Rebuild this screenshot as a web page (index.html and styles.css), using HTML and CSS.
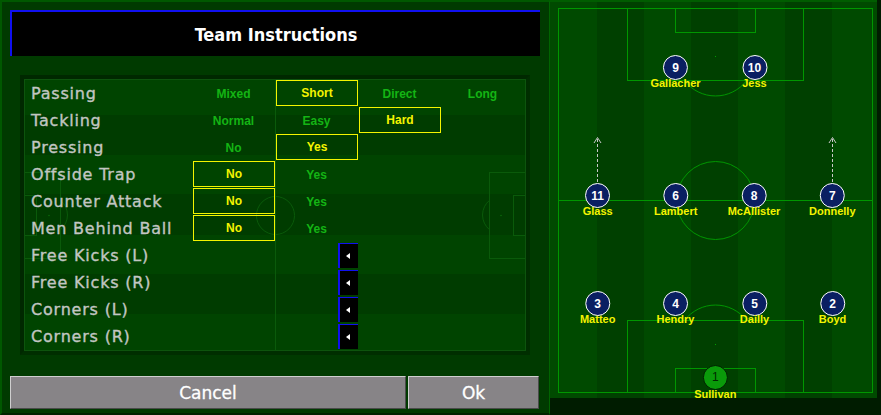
FILE: index.html
```html
<!DOCTYPE html>
<html>
<head>
<meta charset="utf-8">
<title>Team Instructions</title>
<link rel="stylesheet" href="styles.css">
</head>
<body>
<div class="screen">
  <section class="instructions">
    <header class="title">Team Instructions</header>
    <div class="frame">
      <div class="table">
        <svg class="ghost-pitch" width="500" height="270" viewBox="0 0 500 270">
          <rect x="0" y="0" width="500" height="270" fill="#003c00"/>
          <rect x="0" y="-5" width="500" height="40" fill="#004400"/>
          <rect x="0" y="75" width="500" height="39" fill="#004400"/>
          <rect x="0" y="155" width="500" height="39" fill="#004400"/>
          <rect x="0" y="234" width="500" height="40" fill="#004400"/>
          <g fill="none" stroke="#0a5a0a" stroke-width="1">
            <line x1="250.5" y1="0" x2="250.5" y2="270"/>
            <circle cx="250.5" cy="135.5" r="19"/>
            <rect x="464.5" y="92.5" width="40" height="86"/>
            <rect x="488.5" y="115.5" width="20" height="40"/>
            <path d="M464.5 120.3 A19 19 0 0 0 464.5 149.7"/>
            <rect x="-4.5" y="92.5" width="40" height="86"/>
            <rect x="-8.5" y="115.5" width="20" height="40"/>
            <path d="M35.5 120.3 A19 19 0 0 1 35.5 149.7"/>
          </g>
          <circle cx="476" cy="135.5" r="0.8" fill="#0a6a0a"/>
          <circle cx="24" cy="135.5" r="0.8" fill="#0a6a0a"/>
        </svg>

        <div class="row">
          <div class="label">Passing</div>
          <div class="opt">Mixed</div>
          <div class="opt sel"><span class="box">Short</span></div>
          <div class="opt">Direct</div>
          <div class="opt">Long</div>
        </div>
        <div class="row">
          <div class="label">Tackling</div>
          <div class="opt">Normal</div>
          <div class="opt">Easy</div>
          <div class="opt sel"><span class="box">Hard</span></div>
          <div class="opt"></div>
        </div>
        <div class="row">
          <div class="label">Pressing</div>
          <div class="opt">No</div>
          <div class="opt sel"><span class="box">Yes</span></div>
          <div class="opt"></div>
          <div class="opt"></div>
        </div>
        <div class="row">
          <div class="label">Offside Trap</div>
          <div class="opt sel"><span class="box">No</span></div>
          <div class="opt">Yes</div>
          <div class="opt"></div>
          <div class="opt"></div>
        </div>
        <div class="row">
          <div class="label">Counter Attack</div>
          <div class="opt sel"><span class="box">No</span></div>
          <div class="opt">Yes</div>
          <div class="opt"></div>
          <div class="opt"></div>
        </div>
        <div class="row">
          <div class="label">Men Behind Ball</div>
          <div class="opt sel"><span class="box">No</span></div>
          <div class="opt">Yes</div>
          <div class="opt"></div>
          <div class="opt"></div>
        </div>
        <div class="row">
          <div class="label">Free Kicks (L)</div>
          <div class="opt"></div>
          <div class="opt picker"><span class="arrow-btn"><span class="tri"></span></span></div>
          <div class="opt"></div>
          <div class="opt"></div>
        </div>
        <div class="row">
          <div class="label">Free Kicks (R)</div>
          <div class="opt"></div>
          <div class="opt picker"><span class="arrow-btn"><span class="tri"></span></span></div>
          <div class="opt"></div>
          <div class="opt"></div>
        </div>
        <div class="row">
          <div class="label">Corners (L)</div>
          <div class="opt"></div>
          <div class="opt picker"><span class="arrow-btn"><span class="tri"></span></span></div>
          <div class="opt"></div>
          <div class="opt"></div>
        </div>
        <div class="row">
          <div class="label">Corners (R)</div>
          <div class="opt"></div>
          <div class="opt picker"><span class="arrow-btn"><span class="tri"></span></span></div>
          <div class="opt"></div>
          <div class="opt"></div>
        </div>
      </div>
    </div>
    <div class="buttons">
      <button class="btn cancel">Cancel</button>
      <button class="btn ok">Ok</button>
    </div>
  </section>

  <section class="pitch-panel">
    <svg class="pitch" width="327" height="398" viewBox="0 0 327 398">
      <rect x="0" y="0" width="327" height="398" fill="#004000"/>
      <rect x="0" y="0" width="47" height="398" fill="#004a00"/>
      <rect x="94" y="0" width="47" height="398" fill="#004a00"/>
      <rect x="188" y="0" width="47" height="398" fill="#004a00"/>
      <rect x="282" y="0" width="47" height="398" fill="#004a00"/>
      <g fill="none" stroke="#009600" stroke-width="1">
        <rect x="8.5" y="8.5" width="314" height="384"/>
        <rect x="77.5" y="8.5" width="176" height="72"/>
        <rect x="125.5" y="8.5" width="80" height="24"/>
        <path d="M134.4 80.5 A39 39 0 0 0 196.6 80.5"/>
        <line x1="8.5" y1="200.5" x2="322.5" y2="200.5"/>
        <circle cx="165.5" cy="200.5" r="39"/>
        <rect x="77.5" y="320.5" width="176" height="72"/>
        <rect x="125.5" y="368.5" width="80" height="24"/>
        <path d="M134.4 320.5 A39 39 0 0 1 196.6 320.5"/>
      </g>
      <g fill="#00a000">
        <rect x="165" y="56" width="1" height="1"/>
        <rect x="165" y="344" width="1" height="1"/>
      </g>
      <g fill="none" stroke="#c8c8c8" stroke-width="1">
        <line x1="47.5" y1="139" x2="47.5" y2="182" stroke-dasharray="3 2"/>
        <polyline points="44,143 47.5,137.5 51,143"/>
        <line x1="282.5" y1="139" x2="282.5" y2="182" stroke-dasharray="3 2"/>
        <polyline points="279,143 282.5,137.5 286,143"/>
      </g>
    </svg>

    <div class="player" style="left:125.5px;top:55px"><span class="disc">9</span><span class="name">Gallacher</span></div>
    <div class="player" style="left:204.5px;top:55px"><span class="disc">10</span><span class="name">Jess</span></div>
    <div class="player" style="left:47.7px;top:183px"><span class="disc">11</span><span class="name">Glass</span></div>
    <div class="player" style="left:125.7px;top:183px"><span class="disc">6</span><span class="name">Lambert</span></div>
    <div class="player" style="left:204px;top:183px"><span class="disc">8</span><span class="name">McAllister</span></div>
    <div class="player" style="left:282.3px;top:183px"><span class="disc">7</span><span class="name">Donnelly</span></div>
    <div class="player" style="left:47.7px;top:291px"><span class="disc">3</span><span class="name">Matteo</span></div>
    <div class="player" style="left:125.5px;top:291px"><span class="disc">4</span><span class="name">Hendry</span></div>
    <div class="player" style="left:204.5px;top:291px"><span class="disc">5</span><span class="name">Dailly</span></div>
    <div class="player" style="left:282.5px;top:291px"><span class="disc">2</span><span class="name">Boyd</span></div>
    <div class="player keeper" style="left:165.3px;top:364.5px"><span class="disc">1</span><span class="name">Sullivan</span></div>
  </section>
</div>
</body>
</html>
```

FILE: styles.css
```css
* { box-sizing: border-box; }

html, body {
  margin: 0;
  padding: 0;
  background: #001c00;
}

.screen {
  width: 881px;
  height: 415px;
  overflow: hidden;
  display: flex;
  align-items: flex-start;
  background: #001c00;
}

/* ---------- left: instructions ---------- */
.instructions {
  width: 550px;
  height: 415px;
  flex: none;
  background: #003a00;
  border-top: 2px solid #005800;
  border-left: 2px solid #005800;
  border-right: 1px solid #006400;
  border-bottom: 2px solid #002400;
  padding: 8px 9px 0 8px;
  display: flex;
  flex-direction: column;
}

.title {
  height: 46px;
  background: #000;
  border-top: 2px solid #1010f0;
  border-left: 2px solid #1010f0;
  display: flex;
  align-items: center;
  justify-content: center;
  color: #fff;
  font-family: "DejaVu Sans", sans-serif;
  font-weight: bold;
  font-stretch: condensed;
  font-size: 18px;
  padding-top: 1px;
}

.frame {
  margin: 19px 10px 0 10px;
  border: 4px solid;
  border-color: #002800 #002e00 #002e00 #002800;
}

.table {
  position: relative;
  border: 1px solid #0d540d;
  height: 272px;
  overflow: hidden;
}

.ghost-pitch {
  position: absolute;
  left: 0;
  top: 0;
  display: block;
}

.row {
  position: relative;
  display: grid;
  grid-template-columns: 167px repeat(4, 83px);
  height: 27px;
}

.label {
  padding-left: 6px;
  display: flex;
  align-items: center;
  color: #c2c6c2;
  -webkit-text-stroke: 0.35px #c2c6c2;
  font-family: "DejaVu Sans", sans-serif;
  font-size: 16px;
  letter-spacing: 0.8px;
  white-space: nowrap;
}

.opt {
  display: flex;
  align-items: center;
  justify-content: center;
  color: #14b414;
  font-family: "Liberation Sans", sans-serif;
  font-weight: bold;
  font-size: 12px;
}

.opt.sel {
  color: #f4f400;
  align-items: stretch;
  padding: 0 0 1px 1px;
}

.box {
  flex: 1;
  display: flex;
  align-items: center;
  justify-content: center;
  border: 1px solid #f4f400;
}

.opt.picker {
  justify-content: flex-end;
  align-items: stretch;
  padding: 1px 0 1px 0;
}

.arrow-btn {
  width: 20px;
  background: #000;
  border-left: 2px solid #1010f0;
  border-top: 1px solid #1010f0;
  display: flex;
  align-items: center;
  padding-left: 6px;
}

.tri {
  width: 0;
  height: 0;
  border-top: 3.5px solid transparent;
  border-bottom: 3.5px solid transparent;
  border-right: 4px solid #fff;
}

.buttons {
  margin-top: 21px;
  display: flex;
  gap: 2px;
}

.btn {
  height: 33px;
  background: #878487;
  border: 1px solid;
  border-color: #cfcfcf #4a4a4a #4a4a4a #cfcfcf;
  color: #fff;
  font-family: "DejaVu Sans", sans-serif;
  font-weight: normal;
  font-size: 17px;
  -webkit-text-stroke: 0.3px #fff;
  padding: 0;
}

.btn.cancel { width: 396px; }
.btn.ok { width: 131px; }

/* ---------- right: pitch ---------- */
.pitch-panel {
  position: relative;
  width: 327px;
  height: 398px;
  flex: none;
}

.pitch {
  display: block;
}

.pitch-panel::before {
  content: "";
  position: absolute;
  left: 0;
  top: 0;
  right: 0;
  height: 2px;
  background: #005c00;
}

.player {
  position: absolute;
  transform: translateX(-50%);
  display: flex;
  flex-direction: column;
  align-items: center;
}

.disc {
  width: 25px;
  height: 25px;
  border-radius: 50%;
  background: #0a1f62;
  border: 1.5px solid #fff;
  color: #fff;
  display: flex;
  align-items: center;
  justify-content: center;
  font-family: "Liberation Sans", sans-serif;
  font-weight: bold;
  font-size: 12px;
}

.keeper .disc {
  background: #0a9a0a;
  border: 1px solid #002000;
  color: #002800;
  font-weight: normal;
}

.name {
  margin-top: -3px;
  color: #f4f400;
  font-family: "Liberation Sans", sans-serif;
  font-weight: bold;
  font-size: 11px;
  line-height: 12px;
  white-space: nowrap;
}

.keeper .name {
  margin-top: -2px;
}
```
